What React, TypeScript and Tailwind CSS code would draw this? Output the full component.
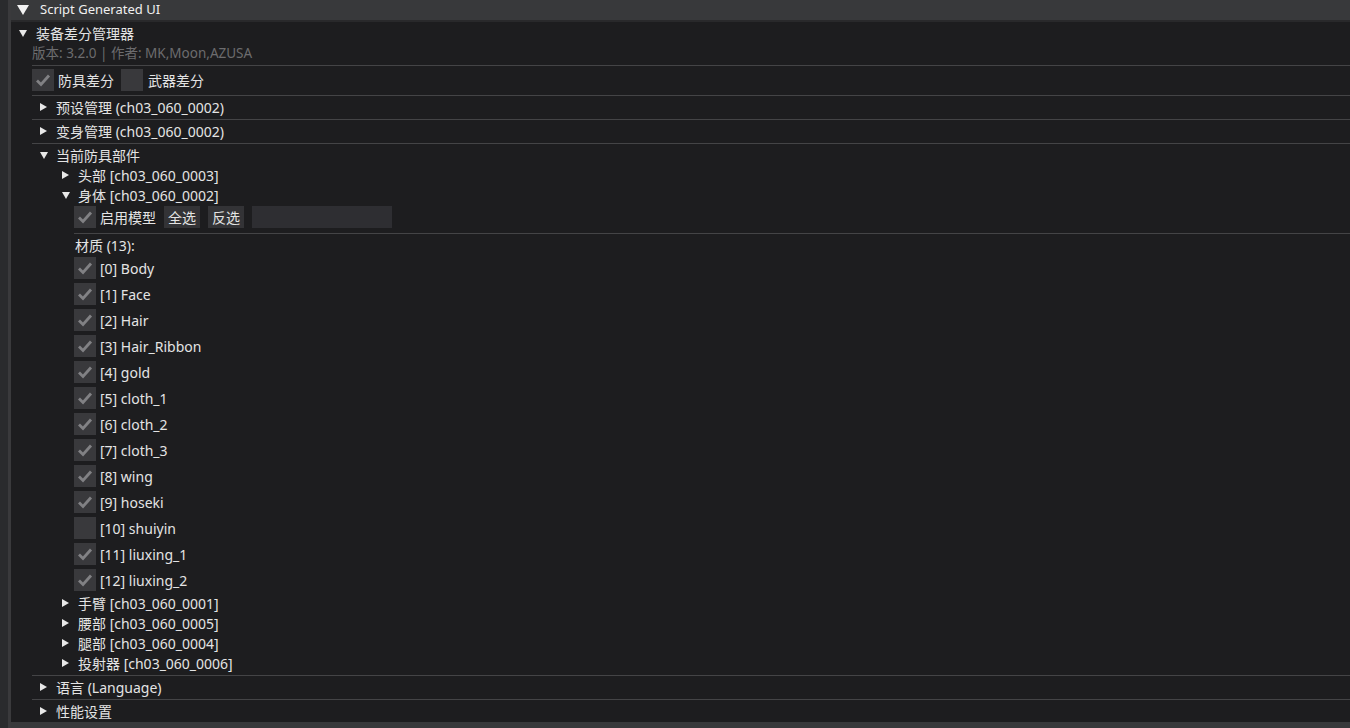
import React from "react";

const font = { fontFamily: '"Noto Sans", "Noto Sans CJK SC", sans-serif' };

function Arrow({ open, big = false }: { open: boolean; big?: boolean }) {
    if (big) {
        return (
            <svg width="12" height="11" viewBox="0 0 12 11" className="shrink-0">
                <polygon points="0,0 12,0 6,10" fill="#f2f2f2" />
            </svg>
        );
    }
    return open ? (
        <svg width="8" height="7" viewBox="0 0 8 7" className="shrink-0">
            <polygon points="0,0 8,0 4,7" fill="#e8e8e8" />
        </svg>
    ) : (
        <svg width="7" height="8" viewBox="0 0 7 8" className="shrink-0">
            <polygon points="0,0 7,4 0,8" fill="#e8e8e8" />
        </svg>
    );
}

function Check({ checked }: { checked: boolean }) {
    return (
        <div className="flex h-[22px] w-[22px] shrink-0 items-center justify-center bg-[#39393c]">
            {checked && (
                <svg width="16" height="14" viewBox="0 0 16 14">
                    <polyline
                        points="2,7.5 6,11.5 14,2.5"
                        fill="none"
                        stroke="#818184"
                        strokeWidth="2.8"
                    />
                </svg>
            )}
        </div>
    );
}

function Sep({ left }: { left: number }) {
    return (
        <div className="flex h-[4px] items-center" style={{ paddingLeft: left }}>
            <div className="h-px flex-1 bg-[#444446]" />
        </div>
    );
}

function TreeRow({ label, open, pad }: { label: string; open: boolean; pad: string }) {
    return (
        <div className={`flex h-[20px] items-center ${pad}`}>
            <div className="flex w-[16px] justify-start">
                <Arrow open={open} />
            </div>
            <span className="whitespace-pre">{label}</span>
        </div>
    );
}

const materials: [string, boolean][] = [
    ["[0] Body", true],
    ["[1] Face", true],
    ["[2] Hair", true],
    ["[3] Hair_Ribbon", true],
    ["[4] gold", true],
    ["[5] cloth_1", true],
    ["[6] cloth_2", true],
    ["[7] cloth_3", true],
    ["[8] wing", true],
    ["[9] hoseki", true],
    ["[10] shuiyin", false],
    ["[11] liuxing_1", true],
    ["[12] liuxing_2", true],
];

export default function App() {
    return (
        <div
            className="flex h-[728px] w-[1350px] overflow-hidden bg-[#1d1d1f] text-[14px] text-[#e4e4e4]"
            style={font}
        >
            <div className="w-[8px] shrink-0 bg-[#2a2b2d]" />
            <div className="w-[3px] shrink-0 bg-[#3a3a3c]" />
            <div className="flex flex-1 flex-col">
                <div className="flex h-[20px] shrink-0 items-center bg-[#38393b] pl-[6px] text-[13px]">
                    <Arrow open big />
                    <span className="ml-[11px] text-[#f0f0f0]">Script Generated UI</span>
                </div>
                <div className="h-[2px] shrink-0 bg-[#29292b]" />
                <div className="flex flex-1 flex-col pt-px">
                    <div className="flex h-[20px] items-center pl-[8px]">
                        <div className="w-[17px]">
                            <Arrow open />
                        </div>
                        <span>装备差分管理器</span>
                    </div>
                    <div className="flex h-[20px] items-center pl-[21px] text-[13.5px] text-[#6c6c6e]">
                        版本: 3.2.0 | 作者: MK,Moon,AZUSA
                    </div>
                    <Sep left={21} />
                    <div className="h-[2px]" />
                    <div className="flex h-[22px] items-center pl-[21px]">
                        <Check checked />
                        <span className="ml-[4px]">防具差分</span>
                        <div className="ml-[7px]">
                            <Check checked={false} />
                        </div>
                        <span className="ml-[5px]">武器差分</span>
                    </div>
                    <div className="h-[2px]" />
                    <Sep left={21} />
                    <TreeRow label="预设管理 (ch03_060_0002)" open={false} pad="pl-[29px]" />
                    <Sep left={21} />
                    <TreeRow label="变身管理 (ch03_060_0002)" open={false} pad="pl-[29px]" />
                    <Sep left={21} />
                    <TreeRow label="当前防具部件" open pad="pl-[29px]" />
                    <TreeRow label="头部 [ch03_060_0003]" open={false} pad="pl-[51px]" />
                    <TreeRow label="身体 [ch03_060_0002]" open pad="pl-[51px]" />
                    <div className="mt-px flex h-[22px] items-center pl-[63px]">
                        <Check checked />
                        <span className="ml-[4px]">启用模型</span>
                        <div className="ml-[8px] flex h-[22px] w-[36px] items-center justify-center bg-[#333336]">
                            全选
                        </div>
                        <div className="ml-[8px] flex h-[22px] w-[36px] items-center justify-center bg-[#333336]">
                            反选
                        </div>
                        <div className="ml-[8px] h-[22px] w-[140px] bg-[#2e2e32]" />
                    </div>
                    <div className="h-[3px]" />
                    <Sep left={63} />
                    <div className="flex h-[20px] items-center pl-[64px]">材质 (13):</div>
                    <div className="flex flex-col gap-[4px] pt-[2px] pl-[63px]">
                        {materials.map(([name, on]) => (
                            <div key={name} className="flex h-[22px] items-center">
                                <Check checked={on} />
                                <span className="ml-[4px]">{name}</span>
                            </div>
                        ))}
                    </div>
                    <div className="h-[2px]" />
                    <TreeRow label="手臂 [ch03_060_0001]" open={false} pad="pl-[51px]" />
                    <TreeRow label="腰部 [ch03_060_0005]" open={false} pad="pl-[51px]" />
                    <TreeRow label="腿部 [ch03_060_0004]" open={false} pad="pl-[51px]" />
                    <TreeRow label="投射器 [ch03_060_0006]" open={false} pad="pl-[51px]" />
                    <Sep left={21} />
                    <TreeRow label="语言 (Language)" open={false} pad="pl-[29px]" />
                    <Sep left={21} />
                    <TreeRow label="性能设置" open={false} pad="pl-[29px]" />
                </div>
                <div className="h-[6px] shrink-0 bg-[#38393b]" />
            </div>
        </div>
    );
}
